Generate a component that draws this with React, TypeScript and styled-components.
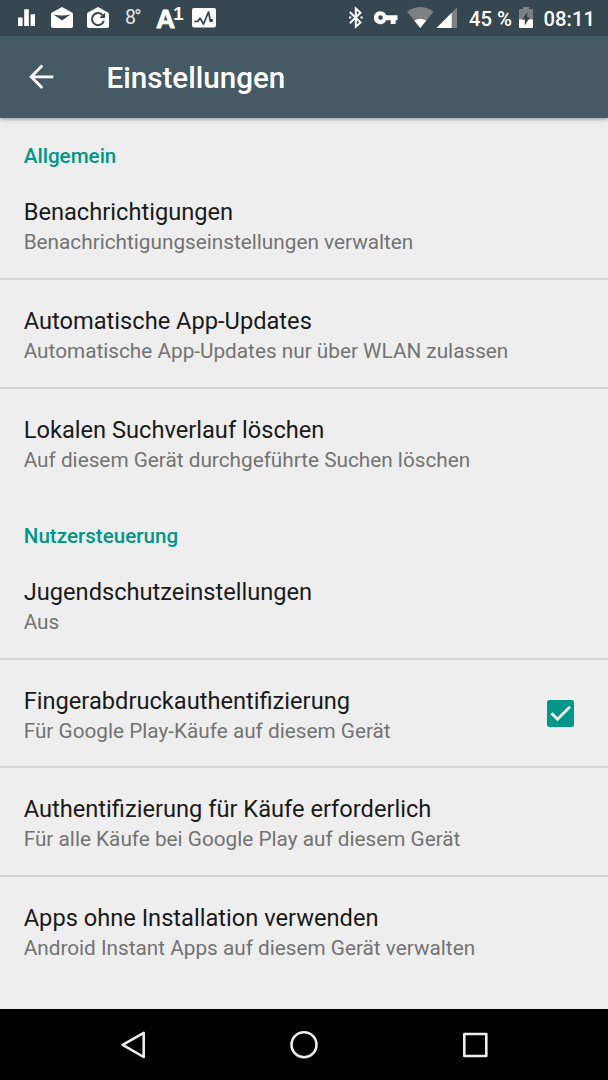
import React from "react";
import styled, { createGlobalStyle } from "styled-components";

const GlobalStyle = createGlobalStyle`
  * { box-sizing: border-box; }
  body { margin: 0; background: #eeeeee; font-family: Roboto, "Liberation Sans", sans-serif; }
`;

const Screen = styled.div`
  display: flex;
  flex-direction: column;
  width: 608px;
  height: 1080px;
  overflow: hidden;
  background: #eeeeee;
`;

const StatusBar = styled.div`
  display: flex;
  flex: none;
  height: 36px;
  justify-content: space-between;
  background: #37474f;
  border-bottom: 1px solid #3d4e57;
  color: #fff;
`;

const StatusGroup = styled.div`
  display: flex;
  align-items: flex-start;
`;

const StatusIcon = styled.svg<{ $left?: number }>`
  display: block;
  flex: none;
  height: 35px;
  margin-left: ${(p) => p.$left ?? 0}px;
`;

const StatusText = styled.span<{ $left: number; $width: number }>`
  flex: none;
  width: ${(p) => p.$width}px;
  margin-left: ${(p) => p.$left}px;
  font-size: 20.3px;
  font-weight: 500;
  line-height: 38px;
  white-space: nowrap;
`;

const Temperature = styled(StatusText)`
  font-size: 19.5px;
  font-weight: 400;
  letter-spacing: -1.8px;
  line-height: 36px;
  color: #e4e7e9;
`;

const Carrier = styled.span`
  display: flex;
  flex: none;
  width: 25px;
  margin-left: 15px;
  font-family: "Liberation Sans", sans-serif;
  font-size: 26.5px;
  font-weight: 700;
  line-height: 39px;
  -webkit-text-stroke: 0.8px #fff;
`;

const CarrierDigit = styled.span`
  margin-left: -2px;
  font-size: 18.5px;
  line-height: 28px;
  -webkit-text-stroke: 0;
`;

const AppBar = styled.header`
  display: flex;
  flex: none;
  align-items: center;
  height: 82px;
  padding-left: 24px;
  background: #455a64;
  color: #fff;
  box-shadow: 0 1px 4px rgba(0, 0, 0, 0.4);
  z-index: 1;
`;

const BackIcon = styled.svg`
  width: 34px;
  height: 34px;
`;

const PageTitle = styled.h1`
  margin: 2px 0 0 48.5px;
  font-size: 29.6px;
  font-weight: 500;
  line-height: 36px;
`;

const Content = styled.main`
  flex: 1;
  padding-top: 24px;
`;

const Section = styled.section`
  & + & { margin-top: 24.5px; }
`;

const SectionTitle = styled.h2`
  margin: 0;
  padding-left: 23.8px;
  font-size: 20.6px;
  font-weight: 500;
  line-height: 29px;
  color: #009688;
`;

const Row = styled.div<{ $last: boolean }>`
  display: flex;
  height: 108.8px;
  padding: 25px 34px 0 23.7px;
  justify-content: space-between;
  border-bottom: ${(p) => (p.$last ? 0 : 2)}px solid #d3d3d3;
`;

const Labels = styled.div`
  white-space: nowrap;
`;

const RowTitle = styled.div`
  font-size: 23.65px;
  line-height: 32px;
  color: #1a1a1a;
`;

const RowSummary = styled.div`
  font-size: 20.75px;
  line-height: 28px;
  color: #737373;
`;

const CheckBox = styled.svg`
  width: 27px;
  height: 27px;
  margin-top: 15px;
`;

const NavBar = styled.nav`
  display: flex;
  flex: none;
  height: 71px;
  padding: 0 98px;
  align-items: center;
  justify-content: space-between;
  background: #000;
`;

const NavIcon = styled.svg`
  width: 70px;
  height: 71px;
  fill: none;
  stroke: #eee;
  stroke-width: 2.6;
  stroke-linejoin: round;
`;

type Item = { title: string; summary: string; checked?: boolean };
const sections: { name: string; items: Item[] }[] = [
  {
    name: "Allgemein",
    items: [
      { title: "Benachrichtigungen", summary: "Benachrichtigungseinstellungen verwalten" },
      { title: "Automatische App-Updates", summary: "Automatische App-Updates nur über WLAN zulassen" },
      { title: "Lokalen Suchverlauf löschen", summary: "Auf diesem Gerät durchgeführte Suchen löschen" },
    ],
  },
  {
    name: "Nutzersteuerung",
    items: [
      { title: "Jugendschutzeinstellungen", summary: "Aus" },
      { title: "Fingerabdruckauthentifizierung", summary: "Für Google Play-Käufe auf diesem Gerät", checked: true },
      { title: "Authentifizierung für Käufe erforderlich", summary: "Für alle Käufe bei Google Play auf diesem Gerät" },
      { title: "Apps ohne Installation verwenden", summary: "Android Instant Apps auf diesem Gerät verwalten" },
    ],
  },
];

export default function App() {
  return (
    <Screen>
      <GlobalStyle />
      <StatusBar>
        <StatusGroup>
          <StatusIcon $left={18} width="17" viewBox="0 0 17 35" fill="#fff">
            <path d="M0 17.5h4.6V26H0zM6.2 9.3h4.6V26H6.2zM12.6 14.3h4.4V26h-4.4z" />
          </StatusIcon>
          <StatusIcon $left={16} width="22" viewBox="0 0 22 35">
            <path d="M11 7L21 12.6Q22 13.2 22 14.5V26Q22 28 20 28H2Q0 28 0 26V14.5Q0 13.2 1 12.6Z" fill="#fff" />
            <path d="M2.5 14.5Q11 16.5 19.5 14.5L11 20.5Z" fill="#37474f" />
          </StatusIcon>
          <StatusIcon $left={14} width="22" viewBox="0 0 22 35">
            <path d="M11 7L21 12.6Q22 13.2 22 14.5V26Q22 28 20 28H2Q0 28 0 26V14.5Q0 13.2 1 12.6Z" fill="#fff" />
            <path d="M15.8 15.5A6 6 0 1 0 16.8 20.7" fill="none" stroke="#37474f" strokeWidth="2" />
            <path d="M18 12.8V18H12.3Z" fill="#37474f" />
          </StatusIcon>
          <Temperature $left={16} $width={16}>8°</Temperature>
          <Carrier>A<CarrierDigit>1</CarrierDigit></Carrier>
          <StatusIcon $left={11} width="24" viewBox="0 0 24 35">
            <rect y="8" width="24" height="19.5" rx="2" fill="#fff" />
            <path d="M2.5 21.3H6L8 18.3L11.5 24L16.5 12L18.3 20.5H21" fill="none" stroke="#37474f" strokeWidth="1.8" strokeLinejoin="round" />
            <circle cx="19" cy="20.5" r="1.7" fill="#37474f" />
          </StatusIcon>
        </StatusGroup>
        <StatusGroup>
          <StatusIcon width="14" viewBox="0 0 14 35" fill="none" stroke="#fff" strokeWidth="2">
            <path d="M0.8 12L11.5 22.4L6.8 26.7V8.5L11.5 12.8L0.8 23.2" />
            <path d="M0 17.6h2.2M11.5 17.6h2.2" />
          </StatusIcon>
          <StatusIcon $left={11} width="24" viewBox="0 0 24 35">
            <path fillRule="evenodd" fill="#fff" d="M12.3 15.2A6.5 6.5 0 1 0 12.3 20.2H16.8V24H21.6V20.2H23.5V15.2ZM6.5 15.3A2.3 2.3 0 1 1 6.5 19.9A2.3 2.3 0 1 1 6.5 15.3Z" />
          </StatusIcon>
          <StatusIcon $left={9} width="27" viewBox="0 0 27 35">
            <path d="M0 11.5Q13.3 2.5 26.6 11.5L13.3 28Z" fill="#7d8184" />
            <path d="M7.3 20.4Q13.3 17 19.3 20.4L13.3 28Z" fill="#fff" />
          </StatusIcon>
          <StatusIcon $left={2} width="21" viewBox="0 0 21 35">
            <path d="M0.5 28L21 7.5V28Z" fill="#7d8184" />
            <path d="M0.5 28L15.7 12.8V28Z" fill="#fff" />
          </StatusIcon>
          <StatusText $left={12.5} $width={50}>45 %</StatusText>
          <StatusIcon $left={0} width="14" viewBox="0 0 14 35">
            <path d="M0 10Q0 9 1 9H4V7H10V9H13Q14 9 14 10V20H0Z" fill="#7d8184" />
            <path d="M0 19.5H14V27Q14 28 13 28H1Q0 28 0 27Z" fill="#fff" />
            <path d="M8.3 12V17.3H11L5.8 25.5V19.5H3.2Z" fill="#37474f" />
          </StatusIcon>
          <StatusText $left={10.5} $width={64.5}>08:11</StatusText>
        </StatusGroup>
      </StatusBar>
      <AppBar>
        <BackIcon viewBox="0 0 34 34" fill="none" stroke="#fff" strokeWidth="2.8">
          <path d="M18.3 5.5L7.2 16.8L18.3 28M7.5 16.8H29.3" />
        </BackIcon>
        <PageTitle>Einstellungen</PageTitle>
      </AppBar>
      <Content>
        {sections.map((s) => (
          <Section key={s.name}>
            <SectionTitle>{s.name}</SectionTitle>
            {s.items.map((item, i) => (
              <Row key={item.title} $last={i === s.items.length - 1}>
                <Labels>
                  <RowTitle>{item.title}</RowTitle>
                  <RowSummary>{item.summary}</RowSummary>
                </Labels>
                {item.checked && (
                  <CheckBox viewBox="0 0 27 27">
                    <rect width="27" height="27" rx="2.5" fill="#009688" />
                    <path d="M4.5 13.2L10.5 19.2L23 6.8" fill="none" stroke="#f3f3f3" strokeWidth="2.8" />
                  </CheckBox>
                )}
              </Row>
            ))}
          </Section>
        ))}
      </Content>
      <NavBar>
        <NavIcon viewBox="0 0 70 71"><path d="M24.7 35.8L45.7 23.8V48Z" /></NavIcon>
        <NavIcon viewBox="0 0 70 71"><circle cx="35" cy="35.7" r="12.5" /></NavIcon>
        <NavIcon viewBox="0 0 70 71"><rect x="24.3" y="25" width="22" height="22" /></NavIcon>
      </NavBar>
    </Screen>
  );
}
